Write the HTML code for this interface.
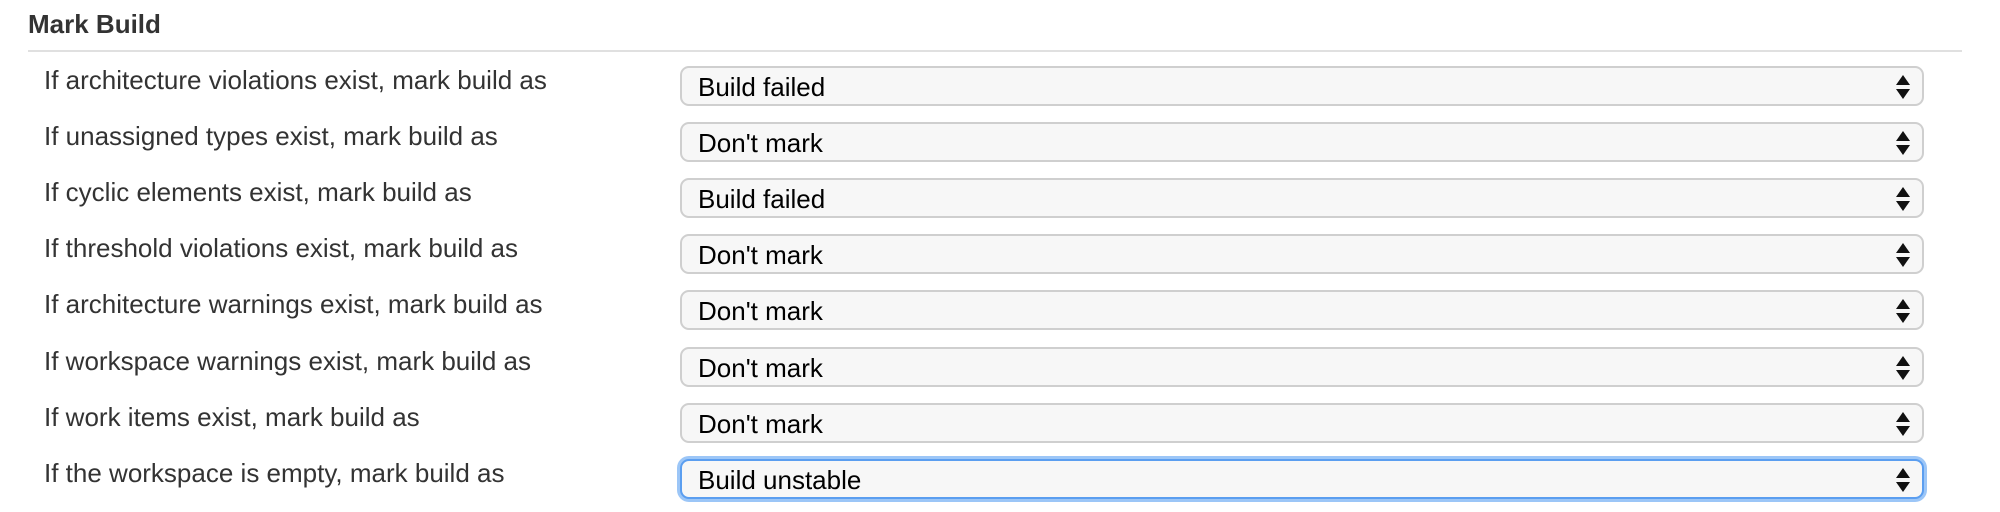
<!DOCTYPE html>
<html><head><style>
body{margin:0;width:2000px;height:512px;background:#fff;font-family:"Liberation Sans",Arial,sans-serif;position:relative;overflow:hidden;color:#333}
h1{position:absolute;left:28px;top:9px;margin:0;font-size:26px;font-weight:bold;color:#333}
.hr{position:absolute;left:28px;top:50px;width:1934px;height:2px;background:#e0e0e0}
.lbl{position:absolute;left:44px;font-size:26px;color:#333}
.sel{position:absolute;left:680px;width:1240px;height:36px;border:2px solid #cfcfcf;border-radius:9px;background:#f7f7f7;box-sizing:content-box;font-size:26px;color:#000}
.sel span{position:absolute;left:16px;top:4px}
.sel svg{position:absolute;right:11px;top:6px}
.focus{border-color:#5b9ef0;box-shadow:0 0 0 3px #9cc6f7}
</style></head><body>
<h1>Mark Build</h1>
<div class="hr"></div>

<div class="lbl" style="top:65px">If architecture violations exist, mark build as</div>
<div class="sel" style="top:66px"><span>Build failed</span><svg width="16" height="26"><path d="M8 1L15 11H1Z M8 25L15 15H1Z" fill="#111"/></svg></div>

<div class="lbl" style="top:121px">If unassigned types exist, mark build as</div>
<div class="sel" style="top:122px"><span>Don't mark</span><svg width="16" height="26"><path d="M8 1L15 11H1Z M8 25L15 15H1Z" fill="#111"/></svg></div>

<div class="lbl" style="top:177px">If cyclic elements exist, mark build as</div>
<div class="sel" style="top:178px"><span>Build failed</span><svg width="16" height="26"><path d="M8 1L15 11H1Z M8 25L15 15H1Z" fill="#111"/></svg></div>

<div class="lbl" style="top:233px">If threshold violations exist, mark build as</div>
<div class="sel" style="top:234px"><span>Don't mark</span><svg width="16" height="26"><path d="M8 1L15 11H1Z M8 25L15 15H1Z" fill="#111"/></svg></div>

<div class="lbl" style="top:289px">If architecture warnings exist, mark build as</div>
<div class="sel" style="top:290px"><span>Don't mark</span><svg width="16" height="26"><path d="M8 1L15 11H1Z M8 25L15 15H1Z" fill="#111"/></svg></div>

<div class="lbl" style="top:346px">If workspace warnings exist, mark build as</div>
<div class="sel" style="top:347px"><span>Don't mark</span><svg width="16" height="26"><path d="M8 1L15 11H1Z M8 25L15 15H1Z" fill="#111"/></svg></div>

<div class="lbl" style="top:402px">If work items exist, mark build as</div>
<div class="sel" style="top:403px"><span>Don't mark</span><svg width="16" height="26"><path d="M8 1L15 11H1Z M8 25L15 15H1Z" fill="#111"/></svg></div>

<div class="lbl" style="top:458px">If the workspace is empty, mark build as</div>
<div class="sel focus" style="top:459px"><span>Build unstable</span><svg width="16" height="26"><path d="M8 1L15 11H1Z M8 25L15 15H1Z" fill="#111"/></svg></div>
</body></html>
